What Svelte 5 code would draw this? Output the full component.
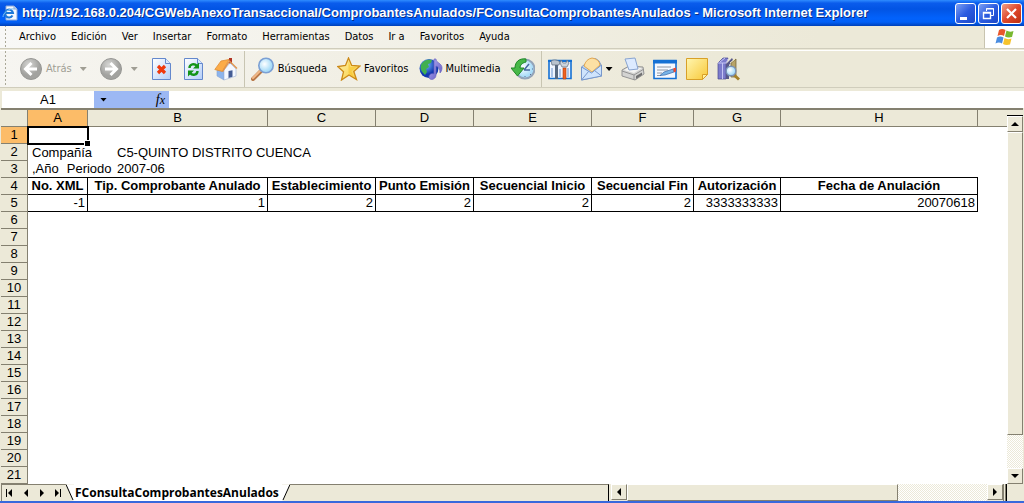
<script>
  const menus = ['Archivo', 'Edición', 'Ver', 'Insertar', 'Formato', 'Herramientas', 'Datos', 'Ir a', 'Favoritos', 'Ayuda'];
  const columns = [
    { id: 'A', width: 60, title: 'No. XML', value: '-1' },
    { id: 'B', width: 180, title: 'Tip. Comprobante Anulado', value: '1' },
    { id: 'C', width: 108, title: 'Establecimiento', value: '2' },
    { id: 'D', width: 98, title: 'Punto Emisión', value: '2' },
    { id: 'E', width: 118, title: 'Secuencial Inicio', value: '2' },
    { id: 'F', width: 102, title: 'Secuencial Fin', value: '2' },
    { id: 'G', width: 87, title: 'Autorización', value: '3333333333' },
    { id: 'H', width: 197, title: 'Fecha de Anulación', value: '20070618' }
  ];
  const emptyRows = Array.from({ length: 16 }, (_, i) => i + 6);
  let cellName = $state('A1');
  let formula = $state('');
</script>

<div class="window">
  <header class="title">
    <svg class="app" viewBox="0 0 16 16" aria-hidden="true">
      <path d="M4 1h8l3 3v11H4z" fill="#f4f8ff" stroke="#8aa8d8" />
      <path d="M12 1v3h3" fill="#c8daf4" stroke="#8aa8d8" />
      <path d="M10.500 10.500A4 4 0 1 1 11 8H4" fill="none" stroke="#1c78d8" stroke-width="2" />
      <path d="M1 12C1 8 7 3 12 4" fill="none" stroke="#7cc0f4" />
    </svg>
    <h1>http://192.168.0.204/CGWebAnexoTransaccional/ComprobantesAnulados/FConsultaComprobantesAnulados - Microsoft Internet Explorer</h1>
    <button class="ctl" aria-label="Minimizar"><svg viewBox="0 0 19 19"><path d="M4 13h7v3H4z" fill="#fff" /></svg></button>
    <button class="ctl" aria-label="Restaurar"><svg viewBox="0 0 19 19" fill="none" stroke="#fff"><path d="M7.500 7V4.500h7v7H12M7 5h8" /><path d="M4.500 8.500h7v6h-7zM4 9h8" stroke-width="1.400" /></svg></button>
    <button class="ctl close" aria-label="Cerrar"><svg viewBox="0 0 19 19"><path d="M5 5l9 9M14 5l-9 9" stroke="#fff" stroke-width="2.200" /></svg></button>
  </header>

  <div class="menubar">
    <nav>
      {#each menus as m}<button>{m}</button>{/each}
    </nav>
    <div class="flag">
      <svg viewBox="0 0 20 18" aria-hidden="true">
        <path d="M4 2q3-2 6.500 0L9 8Q6 6 2.500 8z" fill="#e8572c" />
        <path d="M11.500 2.500q3 2 7 .500L17 9q-4 1-7-.500z" fill="#78b830" />
        <path d="M2 9.500q3-2 6.500 0L7 15.500q-3-2-6.500 0z" fill="#4a8ce0" />
        <path d="M9.500 10q3 2 7 .500L15 16.500q-4 1-7-.500z" fill="#f6c32c" />
      </svg>
    </div>
  </div>

  <svg class="defs" aria-hidden="true">
    <defs>
      <radialGradient id="gray" cx=".4" cy=".3"><stop offset="0" stop-color="#d6d6d4" /><stop offset="1" stop-color="#a2a29f" /></radialGradient>
      <linearGradient id="page" x2="1" y2="1"><stop offset="0" stop-color="#fff" /><stop offset="1" stop-color="#b4cef8" /></linearGradient>
      <linearGradient id="gold" x2="1" y2="1"><stop offset="0" stop-color="#fff6b0" /><stop offset="1" stop-color="#f8c838" /></linearGradient>
      <radialGradient id="lens" cx=".4" cy=".4"><stop offset="0" stop-color="#fff" /><stop offset="1" stop-color="#a8dcf8" /></radialGradient>
      <radialGradient id="globe" cx=".35" cy=".3"><stop offset="0" stop-color="#78c0fc" /><stop offset="1" stop-color="#1038b0" /></radialGradient>
      <linearGradient id="note" x2="1" y2="1"><stop offset="0" stop-color="#b4b0f4" /><stop offset="1" stop-color="#5c54c0" /></linearGradient>
    </defs>
  </svg>

  <div class="toolbar">
    <button class="off split">
      <svg viewBox="0 0 24 24"><circle cx="12" cy="12" r="10.500" fill="url(#gray)" stroke="#979794" /><path d="M12.500 6L6.500 12l6 6M7 12h11" fill="none" stroke="#fff" stroke-width="3" /></svg>
      <span>Atrás</span><i class="drop far"></i>
    </button>
    <button class="off split" aria-label="Adelante">
      <svg viewBox="0 0 24 24"><circle cx="12" cy="12" r="10.500" fill="url(#gray)" stroke="#979794" /><path d="M11.500 6l6 6-6 6M17 12H6" fill="none" stroke="#fff" stroke-width="3" /></svg>
      <i class="drop far"></i>
    </button>
    <button aria-label="Detener">
      <svg viewBox="0 0 24 24"><path d="M2.500 1.500h13l5 5v16h-18z" fill="url(#page)" stroke="#6488cc" /><path d="M15.500 1.500v5h5" fill="#dce8fc" stroke="#6488cc" /><path d="M8 9l7 7M15 9l-7 7" stroke="#f0380c" stroke-width="3.200" /></svg>
    </button>
    <button aria-label="Actualizar">
      <svg viewBox="0 0 24 24"><path d="M2.500 1.500h13l5 5v16h-18z" fill="url(#page)" stroke="#6488cc" /><path d="M15.500 1.500v5h5" fill="#dce8fc" stroke="#6488cc" /><path d="M7.500 11c0-4 5-5 7.500-2M15.500 14c0 4-5 5-7.500 2" fill="none" stroke="#149418" stroke-width="2.400" /><path d="M17 5.500v6h-6zM6 19.500v-6h6z" fill="#149418" /></svg>
    </button>
    <button aria-label="Inicio">
      <svg viewBox="0 0 24 24"><path d="M15 1h3v6h-3z" fill="#b03424" /><path d="M3 12l7 0v11l-7-4z" fill="#8cb4ec" stroke="#88a4d4" stroke-width=".600" /><path d="M10 13l6-7 6 6v7l-12 4z" fill="#f4f8ff" stroke="#9cb0d4" stroke-width=".600" /><path d="M.800 12.500L7 4l8-1.500-6.500 12z" fill="#fcac48" stroke="#e08c34" stroke-width=".800" /><path d="M8.500 14.500L15.500 4 23 11.500" fill="none" stroke="#e0944c" stroke-width="1.400" /><path d="M14.500 14l4-.800v6.500l-4 1.300z" fill="#445c94" /></svg>
    </button>
    <span class="sep"></span>
    <button class="wide">
      <svg viewBox="0 0 24 24"><path d="M10 14l-8 8" stroke="#b87848" stroke-width="4" stroke-linecap="round" /><path d="M9 14l-7 7" stroke="#f0b888" stroke-width="2" stroke-linecap="round" /><circle cx="15" cy="8.500" r="7.200" fill="url(#lens)" stroke="#7ca0d4" stroke-width="1.600" /></svg>
      <span>Búsqueda</span>
    </button>
    <button class="wide">
      <svg viewBox="0 0 24 24"><path d="M11.500 1l3.200 7.500 8.300.500-6.200 5.500 2.700 8-7.500-4.500L4.500 23l2-8.200L.800 9.500l7.700-1z" fill="url(#gold)" stroke="#cc8a18" stroke-width="1.300" /><path d="M11.500 4l2 6h6l-5 4 2 6-5-4z" fill="#f8c428" opacity=".6" /></svg>
      <span>Favoritos</span>
    </button>
    <button class="wide">
      <svg viewBox="0 0 24 24"><circle cx="10" cy="11.500" r="9.500" fill="url(#globe)" /><path d="M2 8c2-5 7-6 11-5l-1 3-3 1 1 3-3 2 1 3-2 3c-3-3-5-6-4-10z" fill="#40b050" /><path d="M15 2h2c0 4 6 4 6 9 0 2-1 4-2 5 0-4-1-6-4-7v9c0 5-7 6-7 2 0-3 3-4 5-3z" fill="url(#note)" stroke="#6c64c0" stroke-width=".700" /></svg>
      <span>Multimedia</span>
    </button>
    <button aria-label="Historial">
      <svg viewBox="0 0 24 24"><circle cx="14" cy="12" r="9.500" fill="url(#lens)" stroke="#94a4b8" stroke-width="2" /><path d="M13 13l5-6M13 13h6" stroke="#4468a0" stroke-width="1.500" /><path d="M14 4v1M21 12h1M14 19v1M19 17l1 1" stroke="#587098" /><path d="M15 2C8 1 4 5 4 11H0l6.500 8L13 11H9c0-3 2-5 6-6z" fill="#48b848" stroke="#208828" /></svg>
    </button>
    <span class="sep"></span>
    <button aria-label="Herramientas de edición">
      <svg viewBox="0 0 24 24"><path d="M1 3.500h22v18H1z" fill="#eef4ff" stroke="#1470d4" stroke-width="1.600" /><path d="M0 3h24v2H0z" fill="#1470d4" /><path d="M4 11v9M12 12v8M20 11v9" stroke="#6a94d0" /><path d="M7 8h3v14H7z" fill="#566880" /><path d="M3 4c3-2 7-1 9 1l-1 3H4z" fill="#b8c2ce" stroke="#606c7c" stroke-width=".700" /><path d="M15 11h3v11h-3z" fill="#f06020" stroke="#b03c0c" stroke-width=".600" /><path d="M13 3l2 3h3l1-3 2 3-2 4h-5l-2-4z" fill="#ccd4dc" stroke="#606c7c" stroke-width=".700" /></svg>
    </button>
    <button class="mail" aria-label="Correo">
      <svg viewBox="0 0 24 24"><path d="M1.500 10L11 2q5-2 8 2l2.500 5v10L1.500 23z" fill="#b8d4f4" stroke="#7898cc" /><path d="M4 9Q6 2 12 1q7 1 8 7l-8 7z" fill="#fce0a4" stroke="#e4a850" /><path d="M1.500 10l10 6 10-8v11l-20 4z" fill="#cfe4fc" stroke="#7898cc" /><path d="M1.500 23l7-8.500M21.500 19l-7-5.500" stroke="#7898cc" /></svg><i class="drop"></i>
    </button>
    <button aria-label="Imprimir">
      <svg viewBox="0 0 24 24"><path d="M1 13l7-4 14 1 1 7-9 6-13-4z" fill="#d4d4d2" stroke="#949494" /><path d="M3 13l5-3 13 1-8 5z" fill="#f4f4f2" /><path d="M4 2l10-1 3 11-9 1z" fill="#dceaff" stroke="#88a4d0" /><path d="M1 14l12 4 10-6M13 18v5" fill="none" stroke="#949494" /><path d="M15 19l6-3.500v2.500l-6 4z" fill="#707070" /></svg>
    </button>
    <button aria-label="Editar">
      <svg viewBox="0 0 24 24"><path d="M1 3.500h22v18H1z" fill="#f4f8ff" stroke="#1470d4" stroke-width="1.600" /><path d="M0 3h24v3.500H0z" fill="#1470d4" /><path d="M4 10h14M4 13h11M4 16h5M4 18.500h4" stroke="#9098a4" /><path d="M7 18.500l4-3.500 9-3 1 3-9 3z" fill="#78b4e8" stroke="#3868a8" stroke-width=".700" /><path d="M20 11.500l3-1v4l-2 1z" fill="#e84830" /></svg>
    </button>
    <button aria-label="Nota">
      <svg viewBox="0 0 24 24"><path d="M1.500 1.500h21v16l-5 5h-16z" fill="url(#gold)" stroke="#d8a028" /><path d="M17.500 22.500v-5h5z" fill="#fff0a0" stroke="#d8a028" /></svg>
    </button>
    <button aria-label="Referencia">
      <svg viewBox="0 0 24 24"><path d="M1 6l5-5h5l-2 5v16H1z" fill="#7c7ccc" stroke="#484890" stroke-width=".700" /><path d="M1 6h8l2-4M5.500 6v16M3 5l5-4" fill="none" stroke="#c4c4f4" /><path d="M14 6l5-4v18h-5z" fill="#b8a468" stroke="#6c5c30" stroke-width=".700" /><path d="M9 7l6-6 1 2-4 5v14H9z" fill="#585888" /><path d="M13 6l5-4" stroke="#f0e8c0" /><path d="M16 17l6 5.500" stroke="#a48028" stroke-width="3" /><circle cx="14" cy="14" r="4.800" fill="url(#lens)" stroke="#7890b8" stroke-width="1.400" /></svg>
    </button>
  </div>

  <div class="formula">
    <input class="name" aria-label="Cuadro de nombres" bind:value={cellName} />
    <div class="fx"><button class="drop" aria-label="Nombres"></button><label for="fx">f<small>x</small></label></div>
    <input id="fx" class="expr" bind:value={formula} />
  </div>

  <main>
    <table>
      <colgroup>
        <col style="width:27px" />
        {#each columns as c}<col style="width:{c.width}px" />{/each}
        <col />
      </colgroup>
      <thead>
        <tr>
          <th></th>
          {#each columns as c}<th scope="col" class:on={c.id === 'A'}>{c.id}</th>{/each}
          <th class="last"></th>
        </tr>
      </thead>
      <tbody>
        <tr><th scope="row" class="on">1</th><td class="active"></td><td colspan="8"></td></tr>
        <tr><th scope="row">2</th><td class="label">Compañía</td><td colspan="8" class="text">C5-QUINTO DISTRITO CUENCA</td></tr>
        <tr class="above"><th scope="row">3</th><td class="label"><span class="pair"><span>,Año</span><span>Periodo</span></span></td><td colspan="7" class="text">2007-06</td><td></td></tr>
        <tr class="heads"><th scope="row">4</th>{#each columns as c}<td>{c.title}</td>{/each}<td></td></tr>
        <tr class="values"><th scope="row">5</th>{#each columns as c}<td>{c.value}</td>{/each}<td></td></tr>
        {#each emptyRows as n}<tr><th scope="row">{n}</th><td colspan="9"></td></tr>{/each}
      </tbody>
    </table>
    <div class="vscroll">
      <span class="splitter"></span>
      <button aria-label="Subir"><svg viewBox="0 0 8 8"><path d="M0 6l4-4 4 4z" /></svg></button>
      <span class="thumb"></span>
      <span class="track"></span>
      <button aria-label="Bajar"><svg viewBox="0 0 8 8"><path d="M0 2l4 4 4-4z" /></svg></button>
    </div>
  </main>

  <footer>
    <div class="pager">
      <button aria-label="Primera hoja"><svg viewBox="0 0 8 8"><path d="M0 0h1v8H0zM6 0v8L2 4z" /></svg></button>
      <button aria-label="Hoja anterior"><svg viewBox="0 0 8 8"><path d="M6 0v8L2 4z" /></svg></button>
      <button aria-label="Hoja siguiente"><svg viewBox="0 0 8 8"><path d="M2 0v8l4-4z" /></svg></button>
      <button aria-label="Última hoja"><svg viewBox="0 0 8 8"><path d="M1 0v8l4-4zM6 0h1v8H6z" /></svg></button>
    </div>
    <button class="tab">
      <svg viewBox="0 0 8 16"><path d="M0 0h8v16H7z" fill="#fff" /><path d="M0 0l7 15.500" stroke="#000" /></svg>
      <span>FConsultaComprobantesAnulados</span>
      <svg viewBox="0 0 8 16"><path d="M0 0h8L1 16H0z" fill="#fff" /><path d="M8 0L1 15.500" stroke="#000" /></svg>
    </button>
    <div class="rest"></div>
    <div class="hscroll">
      <button aria-label="Izquierda"><svg viewBox="0 0 8 8"><path d="M6 0v8L2 4z" /></svg></button>
      <span class="thumb"></span>
      <span class="track"></span>
      <button aria-label="Derecha"><svg viewBox="0 0 8 8"><path d="M2 0v8l4-4z" /></svg></button>
    </div>
    <div class="corner"></div>
  </footer>
</div>

<style>
  :global(body) { margin: 0; }
  .window { background: #ece9d8; font: 11px/16px "DejaVu Sans Condensed", "DejaVu Sans", sans-serif; color: #000; border-bottom: 2px solid #3868dc; }
  button { font: inherit; color: inherit; background: none; border: 0; padding: 0; margin: 0; white-space: nowrap; }
  svg { display: block; flex: none; }
  .defs { position: absolute; width: 0; height: 0; }

  .title { display: flex; align-items: center; gap: 2px; height: 26px; padding: 0 2px; background: linear-gradient(#2f8cff, #0a5cec 12%, #0254e4 35%, #0262fc 70%, #0260f6 85%, #0040b8); }
  .app { width: 16px; height: 16px; }
  h1 { flex: 1; min-width: 0; margin: 0 0 0 2px; overflow: hidden; white-space: nowrap; font: bold 13px/20px "Liberation Sans", sans-serif; color: #fff; text-shadow: 1px 1px #0a2c84; }
  .ctl { width: 21px; height: 21px; box-sizing: border-box; border: 1px solid #fff; border-radius: 3px; background: linear-gradient(135deg, #7ca0f4, #2c5ce0 50%, #1c48c8); }
  .ctl svg { width: 19px; height: 19px; }
  .close { background: linear-gradient(135deg, #f0a088, #e0482c 50%, #bc3010); }

  .menubar { display: flex; height: 22px; background: linear-gradient(90deg, #f8f8f6, #ece9d8 80%); border-bottom: 1px solid #d0cdbc; }
  nav { display: flex; flex: 1; gap: 15px; align-items: center; margin-left: 4px; padding-left: 15px; background: radial-gradient(circle, #aaa898 1px, transparent 1px) 0 2px / 3px 4px repeat-y; }
  .flag { width: 39px; background: #fff; border-left: 1px solid #c8c4b0; display: flex; align-items: center; justify-content: center; }
  .flag svg { width: 20px; height: 18px; }

  .toolbar { display: flex; align-items: center; gap: 8px; height: 36px; margin-top: 1px; padding-left: 19px; border-top: 1px solid #fff; border-bottom: 1px solid #d0cdbc; background: radial-gradient(circle, #aaa898 1px, transparent 1px) 4px 3px / 3px 4px repeat-y, linear-gradient(90deg, #f6f5f1, #ece9d8 70%); }
  .toolbar button { display: flex; align-items: center; gap: 3px; }
  .toolbar svg { width: 24px; height: 24px; }
  .toolbar .split { padding-right: 4px; }
  .toolbar .wide { padding-right: 2px; }
  .off { color: #a09e94; }
  .drop { flex: none; width: 7px; height: 4px; background: currentColor; clip-path: polygon(0 0, 100% 0, 50% 100%); }
  .far { margin-left: 5px; }
  .toolbar .mail { gap: 2px; }
  .sep { width: 1px; height: 36px; margin: 0 -2px; background: #c8c5b2; }

  .formula { display: flex; height: 17px; margin: 3px 0 0 2px; background: #fff; }
  .formula input { box-sizing: border-box; min-width: 0; border: 0; padding: 0; background: #fff; font: 13px/17px "Liberation Sans", sans-serif; outline: 0; }
  .name { width: 92px; text-align: center; }
  .fx { display: flex; align-items: center; justify-content: space-between; width: 75px; box-sizing: border-box; padding: 0 4px 0 6px; background: #9cb8f4; }
  .formula .drop { background: #000; }
  .fx label { font: italic 14px/16px "Liberation Serif", serif; }
  .fx small { font-size: 12px; }
  .expr { flex: 1; }

  main { display: flex; margin: 0 1px; border-left: 1px solid #848070; border-top: 2px solid #848070; background: #fff; }
  table { flex: 1; width: 0; table-layout: fixed; border-collapse: separate; border-spacing: 0; margin-left: -1px; background: #fff; font: 13px/16px "Liberation Sans", sans-serif; }
  th, td { box-sizing: border-box; height: 17px; padding: 0; white-space: nowrap; }
  th { background: #ece9d8; font-weight: normal; border-right: 1px solid #848070; border-bottom: 1px solid #848070; text-align: center; }
  th.last { border-right: 0; }
  th.on { background: #fcbc68; }
  td.active { position: relative; outline: 2px solid #000; outline-offset: -1px; }
  td.active::after { content: ""; position: absolute; right: -2px; bottom: -2px; width: 5px; height: 5px; background: #000; border: 1px solid #fff; border-width: 1px 0 0 1px; }
  .label { padding-left: 4px; overflow: visible; }
  .pair { display: flex; gap: 8px; }
  .text { padding-left: 29px; }
  .above td { border-bottom: 1px solid #000; }
  .heads td, .values td { border-right: 1px solid #000; border-bottom: 1px solid #000; }
  .above td:last-child, .heads td:last-child, .values td:last-child { border: 0; }
  .heads td { text-align: center; font-weight: bold; }
  .values td { text-align: right; padding-right: 2px; }

  .vscroll { display: flex; flex-direction: column; width: 16px; background: #ece9d8; }
  .vscroll button, .hscroll button, .pager button { display: flex; align-items: center; justify-content: center; width: 16px; height: 16px; }
  .vscroll svg, .hscroll svg, .pager svg { width: 8px; height: 8px; }
  .vscroll button, .hscroll button, .thumb { box-sizing: border-box; background: #ece9d8; border: 1px solid; border-color: #fff #848070 #848070 #fff; }
  .splitter { height: 5px; border-bottom: 1px solid #000; }
  .thumb { flex: 9; }
  .track { flex: 1; background: repeating-conic-gradient(#fff 0 25%, #ece9d8 0 50%) 0 0 / 2px 2px; }

  footer { display: flex; height: 17px; margin: 0 1px; border-left: 1px solid #848070; }
  .pager { display: flex; align-items: center; width: 64px; border-top: 1px solid #848070; box-sizing: border-box; }
  .tab { display: flex; font: bold 12px/17px "Open Sans", sans-serif; }
  .tab span { background: #fff; padding: 0 3px 0 1px; }
  .tab svg { width: 8px; height: 17px; fill: none; }
  .rest { flex: 317; border-top: 1px solid #848070; border-right: 1px solid #000; }
  .hscroll { display: flex; flex: 390; padding-left: 2px; border-right: 3px double #848070; }
  .hscroll .thumb { flex: 3; }
  .corner { width: 16px; border-left: 1px solid #000; }
</style>
